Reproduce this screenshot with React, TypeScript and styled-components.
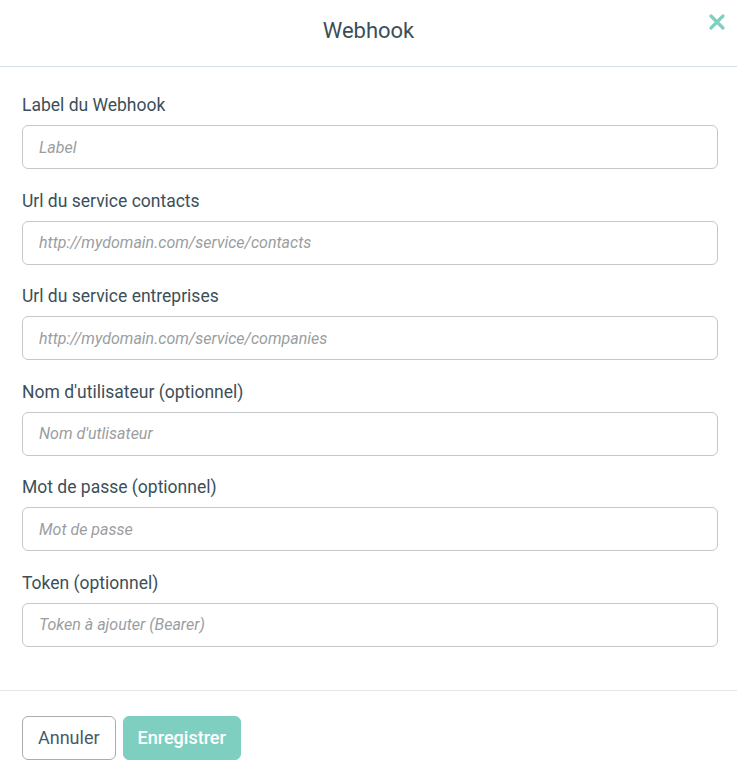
import * as React from 'react';
import styled, { createGlobalStyle } from 'styled-components';

const GlobalStyle = createGlobalStyle`
  body {
    margin: 0;
    background: #ffffff;
    font-family: Roboto, "Open Sans", sans-serif;
  }
`;

const Modal = styled.div`
  width: 737px;
  background: #fff;
  color: #3b4f5a;
`;

const Header = styled.div`
  position: relative;
  height: 66px;
  display: flex;
  align-items: center;
  justify-content: center;
  border-bottom: 1px solid #d8dfe4;
`;

const Title = styled.h1`
  margin: 0;
  font-size: 22px;
  font-weight: 400;
  color: #3b4f5a;
  margin-top: -6px;
`;

const CloseButton = styled.button`
  position: absolute;
  top: 13px;
  right: 11px;
  border: none;
  background: none;
  padding: 0;
  cursor: pointer;
  width: 18px;
  height: 18px;
`;

const Body = styled.form`
  padding: 26px 19px 43px 22px;
  display: flex;
  flex-direction: column;
  gap: 19.5px;
`;

const Field = styled.div`
  display: flex;
  flex-direction: column;
  gap: 8px;
`;

const Label = styled.label`
  font-size: 17.5px;
  line-height: 24px;
  color: #3b4f5a;
`;

const Input = styled.input`
  box-sizing: border-box;
  height: 44px;
  width: 100%;
  border: 1px solid #c4c8cb;
  border-radius: 6px;
  padding: 0 16px;
  font-family: inherit;
  font-size: 16px;
  color: #3b4f5a;
  &::placeholder {
    color: #9a9ea1;
    font-style: italic;
  }
`;

const Footer = styled.div`
  border-top: 1px solid #e3e6e8;
  padding: 25px 22px 22px;
  display: flex;
  gap: 7px;
`;

const Button = styled.button<{ $primary?: boolean }>`
  height: 44px;
  padding: 0 ${p => (p.$primary ? 14 : 15)}px;
  border-radius: 6px;
  font-family: inherit;
  font-size: 18px;
  font-weight: ${p => (p.$primary ? 500 : 400)};
  cursor: pointer;
  border: 1px solid ${p => (p.$primary ? '#7fcfc1' : '#a9adb0')};
  background: ${p => (p.$primary ? '#7fcfc1' : '#fff')};
  color: ${p => (p.$primary ? '#fff' : '#475a6b')};
`;

const fields = [
  { label: 'Label du Webhook', placeholder: 'Label' },
  { label: 'Url du service contacts', placeholder: 'http://mydomain.com/service/contacts' },
  { label: 'Url du service entreprises', placeholder: 'http://mydomain.com/service/companies' },
  { label: "Nom d'utilisateur (optionnel)", placeholder: "Nom d'utlisateur" },
  { label: 'Mot de passe (optionnel)', placeholder: 'Mot de passe' },
  { label: 'Token (optionnel)', placeholder: 'Token à ajouter (Bearer)' },
];

export default function App() {
  return (
    <Modal>
      <GlobalStyle />
      <Header>
        <Title>Webhook</Title>
        <CloseButton aria-label="Fermer">
          <svg width="18" height="18" viewBox="0 0 18 18">
            <path d="M3 3L15 15M15 3L3 15" stroke="#80d0c2" strokeWidth="3.2" strokeLinecap="round" />
          </svg>
        </CloseButton>
      </Header>
      <Body>
        {fields.map((f, i) => (
          <Field key={i}>
            <Label>{f.label}</Label>
            <Input placeholder={f.placeholder} />
          </Field>
        ))}
      </Body>
      <Footer>
        <Button type="button">Annuler</Button>
        <Button type="button" $primary>
          Enregistrer
        </Button>
      </Footer>
    </Modal>
  );
}
